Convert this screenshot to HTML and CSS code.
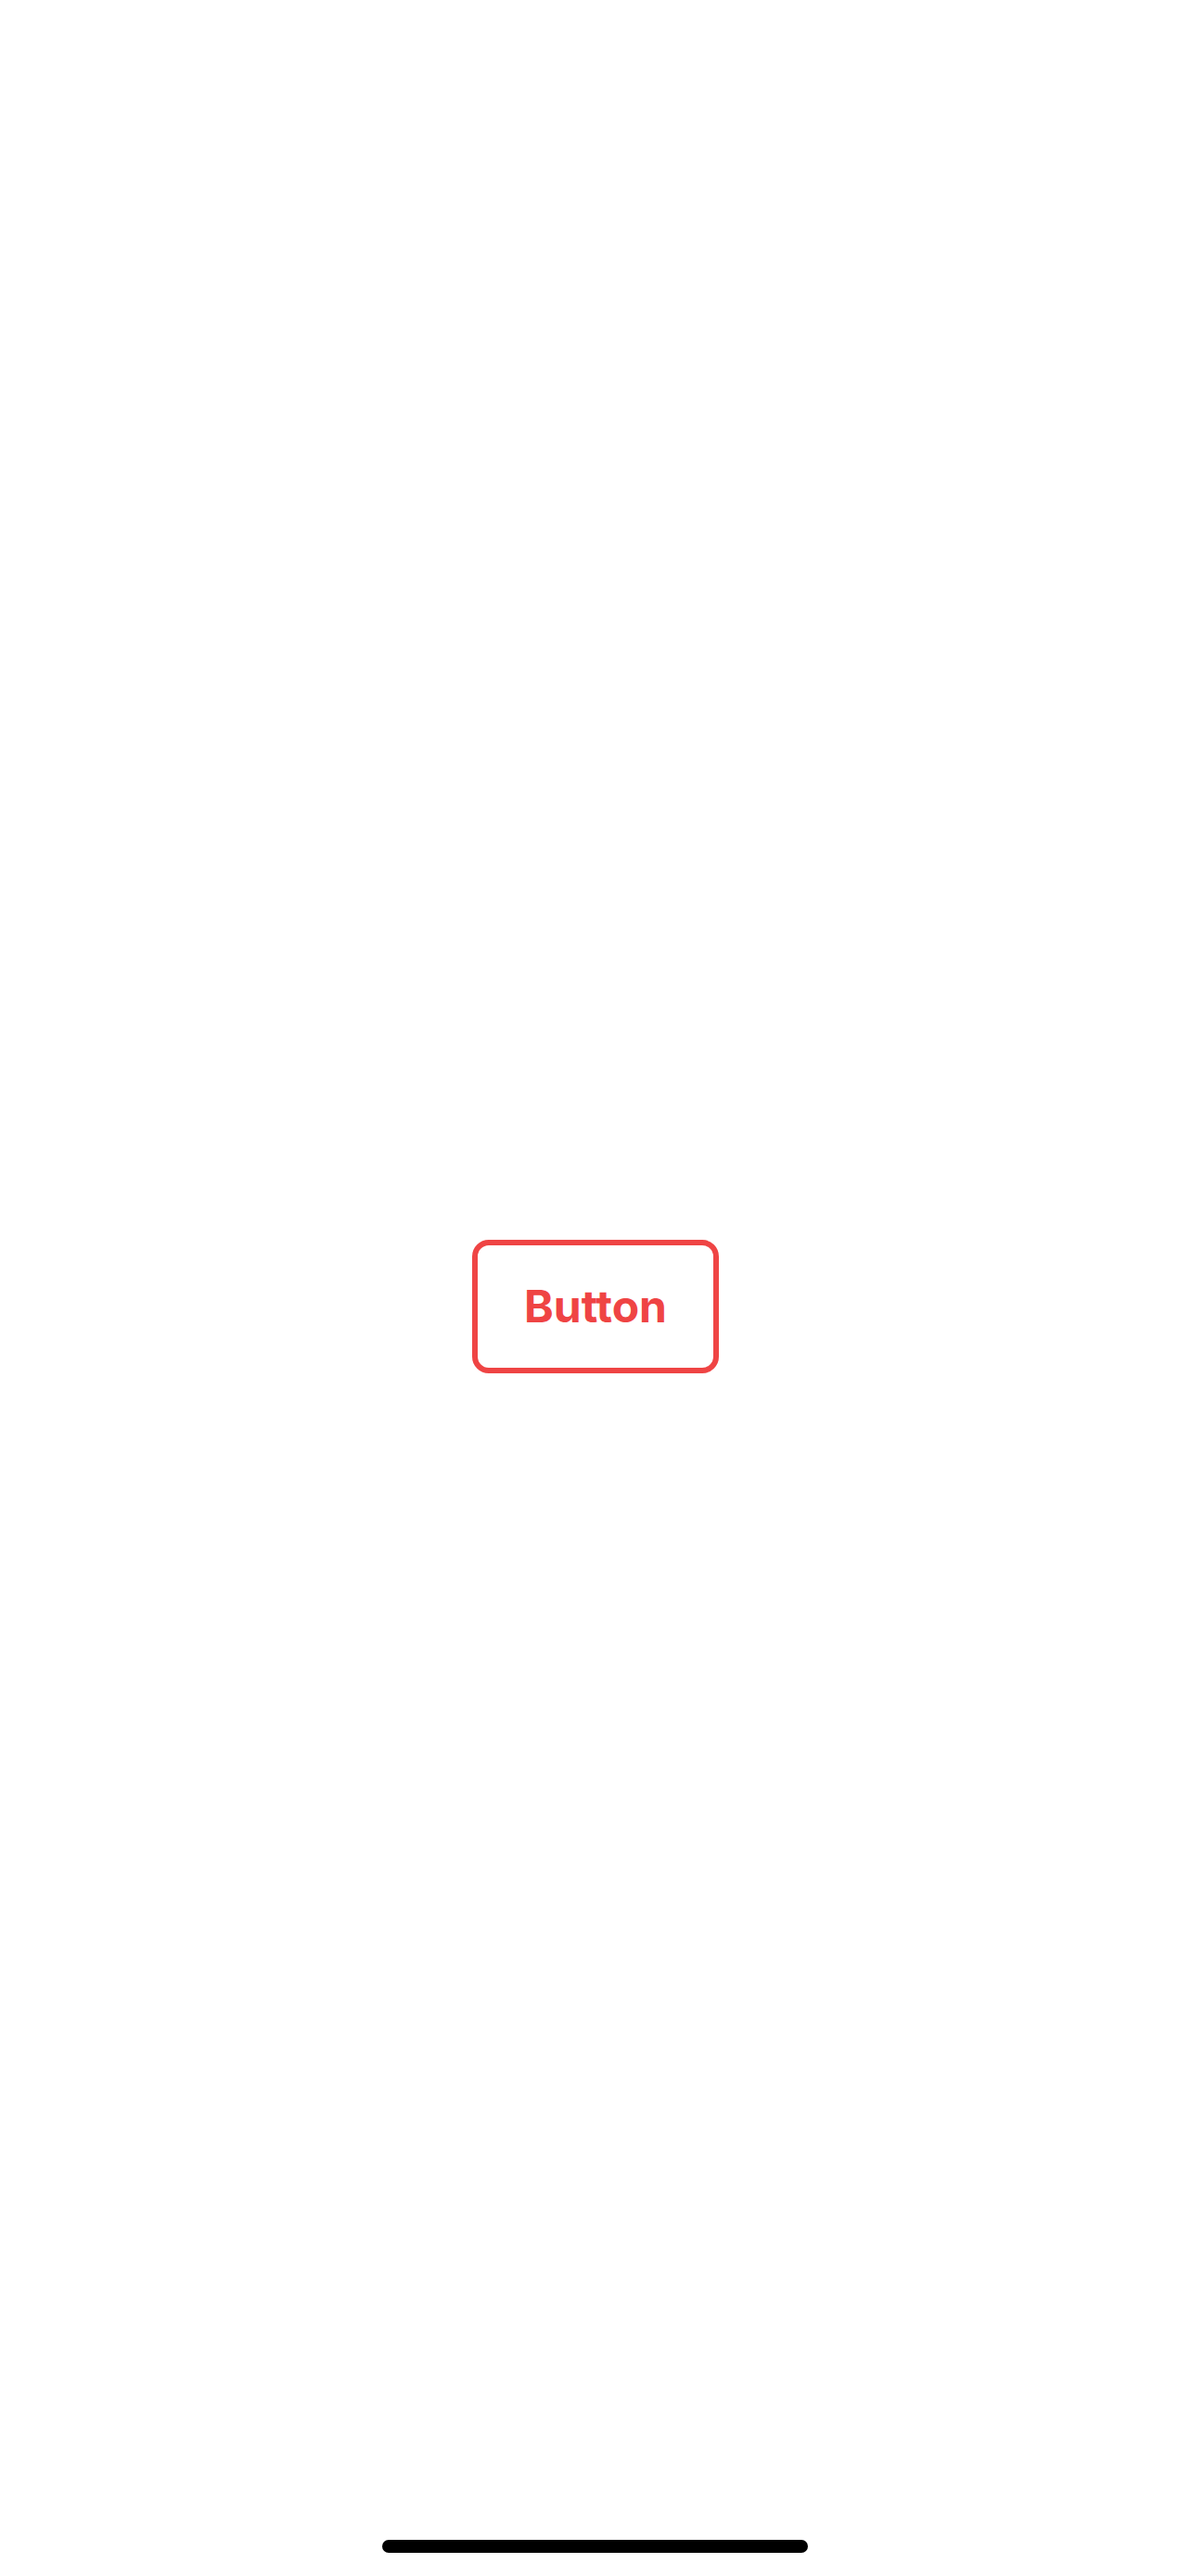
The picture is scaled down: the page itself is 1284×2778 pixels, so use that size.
FILE: index.html
```html
<!DOCTYPE html>
<html lang="en">
<head>
  <meta charset="UTF-8">
  <meta name="viewport" content="width=device-width, initial-scale=1.0">
  <title>Button</title>
  <link rel="stylesheet" href="styles.css">
</head>
<body>
  <div class="screen">
    <div class="content">
      <button class="outlineBtn" type="button">Button</button>
    </div>
    <div class="homeIndicator"></div>
  </div>
</body>
</html>
```

FILE: styles.css
```css
* {
  margin: 0;
  padding: 0;
  box-sizing: border-box;
}
html, body {
  height: 100%;
  background: #fff;
}
body {
  font-family: Inter, Roboto, "Liberation Sans", sans-serif;
}
.screen {
  position: relative;
  height: 100vh;
  display: flex;
  flex-direction: column;
}
.content {
  flex: 1;
  padding-top: 40px;
  display: flex;
  align-items: center;
  justify-content: center;
}
.outlineBtn {
  width: 266px;
  height: 144px;
  border: 6px solid #ef4444;
  border-radius: 18px;
  background: #fff;
  color: #ef4444;
  font-family: Inter, Roboto, "Liberation Sans", sans-serif;
  font-weight: 700;
  font-size: 48px;
  line-height: 1;
  cursor: pointer;
}
.homeIndicator {
  position: absolute;
  left: 50%;
  bottom: 25px;
  width: 459px;
  height: 14px;
  margin-left: -230px;
  border-radius: 7px;
  background: #000;
}
```
